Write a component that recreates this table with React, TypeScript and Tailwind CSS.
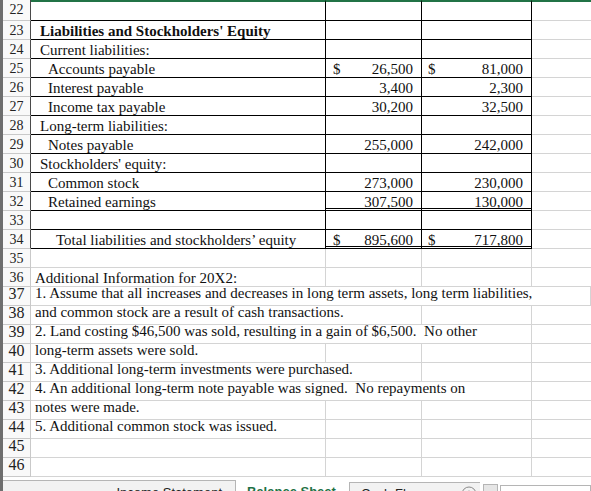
type TRow = {
  n: number;
  label?: string;
  indent?: 0 | 1 | 2;
  bold?: boolean;
  b?: string;
  c?: string;
  dollar?: boolean;
  dbl?: boolean;
};

type NRow = { n: number; text?: string; span?: 1 | 2 | 3 | 4; high?: boolean };

const tableRows: TRow[] = [
  { n: 22 },
  { n: 23, label: "Liabilities and Stockholders' Equity", bold: true },
  { n: 24, label: 'Current liabilities:' },
  { n: 25, label: 'Accounts payable', indent: 1, b: '26,500', c: '81,000', dollar: true },
  { n: 26, label: 'Interest payable', indent: 1, b: '3,400', c: '2,300' },
  { n: 27, label: 'Income tax payable', indent: 1, b: '30,200', c: '32,500' },
  { n: 28, label: 'Long-term liabilities:' },
  { n: 29, label: 'Notes payable', indent: 1, b: '255,000', c: '242,000' },
  { n: 30, label: "Stockholders' equity:" },
  { n: 31, label: 'Common stock', indent: 1, b: '273,000', c: '230,000' },
  { n: 32, label: 'Retained earnings', indent: 1, b: '307,500', c: '130,000', dbl: true },
  { n: 33 },
  { n: 34, label: 'Total liabilities and stockholders’ equity', indent: 2, b: '895,600', c: '717,800', dollar: true, dbl: true },
];

const noteRows: NRow[] = [
  { n: 35 },
  { n: 36, text: 'Additional Information for 20X2:' },
  { n: 37, text: '1. Assume that all increases and decreases in long term assets, long term liabilities,', span: 4, high: true },
  { n: 38, text: 'and common stock are a result of cash transactions.', span: 2, high: true },
  { n: 39, text: '2. Land costing $46,500 was sold, resulting in a gain of $6,500.  No other', span: 3, high: true },
  { n: 40, text: 'long-term assets were sold.', high: true },
  { n: 41, text: '3. Additional long-term investments were purchased.', span: 2, high: true },
  { n: 42, text: '4. An additional long-term note payable was signed.  No repayments on', span: 3, high: true },
  { n: 43, text: 'notes were made.', high: true },
  { n: 44, text: '5. Additional common stock was issued.', high: true },
  { n: 45, high: true },
  { n: 46, high: true },
];

function TableRow({ r }: { r: TRow }) {
  const first = r.n === 22;
  const rowH = first ? 'h-[21px]' : 'h-[19px]';
  const top = first ? 'border-t-2 border-t-[#217346]' : '';
  const numBottom = r.dbl ? 'border-b-[3px] border-double border-b-black' : 'border-b border-b-black';
  const indent = r.indent === 2 ? 'pl-[25px]' : r.indent === 1 ? 'pl-[17px]' : 'pl-[9px]';
  return (
    <div className={`flex shrink-0 ${rowH}`}>
      <div className="w-[28px] shrink-0 border-r border-b border-r-[#4a4a4a] border-b-[#c9c9c9] bg-[#f9f9f9] text-center text-[14px] leading-[18px] pt-[1px] text-[#222]">
        {r.n}
      </div>
      <div className={`w-[295px] shrink-0 border-r border-b border-black ${top} ${indent} pt-[1px] text-[15px] leading-[18px] whitespace-nowrap ${r.bold ? 'font-bold' : ''}`}>
        {r.label}
      </div>
      <div className={`w-[96px] shrink-0 flex justify-between border-r border-r-black ${numBottom} ${top} pl-[7px] pr-[8px] pt-[1px] text-[15px] leading-[18px]`}>
        <span>{r.dollar ? '$' : ''}</span>
        <span>{r.b}</span>
      </div>
      <div className={`w-[110px] shrink-0 flex justify-between border-r border-r-black ${numBottom} ${top} pl-[6px] pr-[8px] pt-[1px] text-[15px] leading-[18px]`}>
        <span>{r.dollar ? '$' : ''}</span>
        <span>{r.c}</span>
      </div>
      <div className={`flex-1 border-b border-b-[#d4d4d4] ${top}`} />
    </div>
  );
}

function NoteRow({ r }: { r: NRow }) {
  const span = r.span ?? 1;
  const txt = r.high ? 'leading-[12px] pt-0' : 'leading-[18px] pt-[1px]';
  const head = r.high ? 'text-[16px] leading-[13px] pt-0' : 'text-[14px] leading-[18px] pt-[1px]';
  const w =
    span === 4 ? 'flex-1' : span === 3 ? 'w-[501px] shrink-0' : span === 2 ? 'w-[391px] shrink-0' : 'w-[295px] shrink-0';
  return (
    <div className="flex h-[19px] shrink-0">
      <div className={`w-[28px] shrink-0 border-r border-b border-[#c9c9c9] bg-[#f9f9f9] text-center text-[#222] ${head}`}>
        {r.n}
      </div>
      <div className={`${w} border-r border-b border-[#d4d4d4] pl-[4px] text-[15px] whitespace-pre ${txt}`}>
        {r.text}
      </div>
      {span < 2 && <div className="w-[96px] shrink-0 border-r border-b border-[#d4d4d4]" />}
      {span < 3 && <div className="w-[110px] shrink-0 border-r border-b border-[#d4d4d4]" />}
      {span < 4 && <div className="flex-1 border-b border-[#d4d4d4]" />}
    </div>
  );
}

function TabBar() {
  return (
    <div className="flex h-[30px] shrink-0 items-start font-['Liberation_Sans',Arial,sans-serif] text-[13px] leading-[13px]">
      <div className="mt-[3px] h-full w-[233px] shrink-0 border-t border-r border-[#b5b5b5] bg-[#f2f2f2] pt-[5px] pr-[13px] text-right text-[#222]">
        Income Statement
      </div>
      <div className="h-full w-[113px] shrink-0 bg-white pt-[8px] pl-[11px] font-bold text-[#1e7145]">
        Balance Sheet
      </div>
      <div className="mt-[5px] flex h-full w-[131px] shrink-0 items-start border-t border-l border-[#b5b5b5] bg-[#f2f2f2] pt-[4px] pl-[11px] text-[#222]">
        <span>Cash Flow</span>
        <svg className="ml-auto mr-[3px] mt-[-1px]" width="16" height="16" viewBox="0 0 16 16">
          <circle cx="8" cy="8" r="7" fill="none" stroke="#8a8a8a" strokeWidth="1" />
          <path d="M8 4.5v7M4.5 8h7" stroke="#8a8a8a" strokeWidth="1" />
        </svg>
      </div>
      <div className="ml-[3px] mt-[7px] h-full w-[15px] shrink-0 border border-[#b5b5b5] bg-[#e6e6e6]" />
      <div className="ml-[2px] mt-[8px] h-full flex-1 border border-[#b5b5b5] bg-white" />
    </div>
  );
}

export default function App() {
  return (
    <div className="flex h-[491px] w-[591px] overflow-hidden bg-white font-['Liberation_Serif','Times_New_Roman',serif] text-[#111]">
      <div className="w-[3px] shrink-0 bg-[#6e6e6e]" />
      <div className="flex min-w-0 flex-1 flex-col">
        {tableRows.map((r) => (
          <TableRow key={r.n} r={r} />
        ))}
        {noteRows.map((r) => (
          <NoteRow key={r.n} r={r} />
        ))}
        <TabBar />
      </div>
    </div>
  );
}
